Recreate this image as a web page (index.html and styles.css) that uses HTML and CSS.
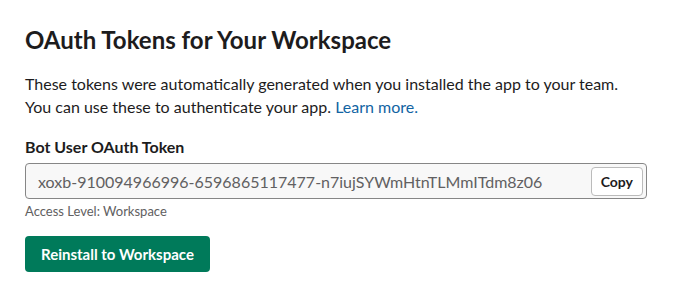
FILE: index.html
```html
<!DOCTYPE html>
<html lang="en">
<head>
    <meta charset="UTF-8" />
    <meta name="viewport" content="width=device-width, initial-scale=1.0"/>
    <title>OAuth Tokens</title>
    <link rel="stylesheet" href="styles.css">
</head>
<body>
    <section class="tokens">
        <h2>OAuth Tokens for Your Workspace</h2>
        <p class="intro">
            These tokens were automatically generated when you installed the app to your team.<br>
            You can use these to authenticate your app. <a href="#">Learn more.</a>
        </p>

        <div class="field">
            <label for="bot-token">Bot User OAuth Token</label>
            <div class="token-box">
                <input id="bot-token" type="text" readonly value="xoxb-910094966996-6596865117477-n7iujSYWmHtnTLMmITdm8z06">
                <button class="btn-copy">Copy</button>
            </div>
            <div class="hint">Access Level: Workspace</div>
        </div>

        <button class="btn-primary">Reinstall to Workspace</button>
    </section>
</body>
</html>
```

FILE: styles.css
```css
* {
    margin: 0;
    padding: 0;
    box-sizing: border-box;
}

body {
    font-family: Lato, 'Noto Sans', sans-serif;
    background: #ffffff;
    color: #1d1c1d;
}

.tokens {
    padding: 25px 25px 0;
    width: 672px;
}

.tokens h2 {
    font-size: 24px;
    font-weight: 700;
    line-height: 30px;
    margin-bottom: 17px;
}

.intro {
    font-size: 16px;
    line-height: 23px;
    margin-bottom: 18px;
}

.intro a {
    color: #1264a3;
    text-decoration: none;
}

.field label {
    display: block;
    font-size: 16px;
    font-weight: 700;
    line-height: 22px;
    margin-bottom: 5px;
}

.token-box {
    display: flex;
    align-items: center;
    height: 36px;
    padding: 0 3px 0 12px;
    background: #f8f8f8;
    border: 1px solid #868686;
    border-radius: 4px;
}

.token-box input {
    flex: 1;
    min-width: 0;
    border: none;
    background: transparent;
    font-family: inherit;
    font-size: 16px;
    color: #616061;
    outline: none;
}

.btn-copy {
    height: 29px;
    padding: 0 9px;
    background: #ffffff;
    border: 1px solid #bbbbbb;
    border-radius: 4px;
    font-family: inherit;
    font-size: 14px;
    font-weight: 700;
    color: #1d1c1d;
}

.hint {
    font-size: 13px;
    line-height: 24px;
    color: #616061;
    margin-bottom: 13px;
}

.btn-primary {
    height: 36px;
    padding: 0 16px;
    background: #007a5a;
    color: #ffffff;
    border: none;
    border-radius: 4px;
    font-family: inherit;
    font-size: 15px;
    font-weight: 700;
}
```
